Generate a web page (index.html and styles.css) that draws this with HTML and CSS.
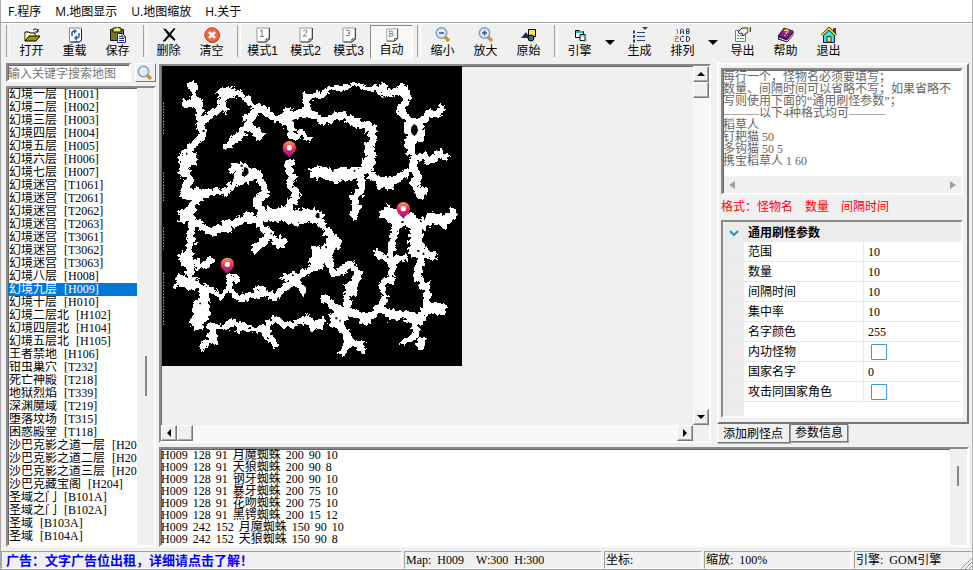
FILE: index.html
```html
<!DOCTYPE html>
<html lang="zh-CN">
<head>
<meta charset="utf-8">
<title>刷怪编辑器</title>
<link rel="stylesheet" href="styles.css">
</head>
<body>
<div class="app">
  <nav class="menu">
    <a href="#">F.程序</a><a href="#">M.地图显示</a><a href="#">U.地图缩放</a><a href="#">H.关于</a>
  </nav>

  <div class="toolbar">
    <i class="sep first"></i>
    <button class="tool"><svg viewBox="0 0 16 16"><path d="M1 14V5h4l1 1h5v3M9 3c2-2 4-1 5 1m0-2v3h-3" fill="none" stroke="#000"/><path d="M1.500 6h4l1 1h4v2H5l-3.500 4z" fill="#ff9"/><path d="M1 14l4-5h11l-4 5z" fill="#9a9a00" stroke="#000"/></svg>打开</button>
    <button class="tool"><svg viewBox="0 0 16 16"><path d="M2.500 1h12v12l-2 2h-10z" fill="#fff" stroke="#888"/><path d="M14.500 2v11l-2 2h-9" fill="none" stroke="#222"/><path d="M5 9V6q0-2 3-2M12 6v3q0 2-3 2" fill="none" stroke="#1d60b8" stroke-width="1.500"/><path d="M7 2l3 2-3 3zM10 8l-3 3 3 3z" fill="#1d60b8"/></svg>重载</button>
    <button class="tool"><svg viewBox="0 0 16 16"><path d="M.500 2.500h13v11H.500z" fill="#777720" stroke="#111"/><path d="M3 1h3V0h3v1h2v4H3z" fill="#ee6" stroke="#111"/><path d="M7.500 6.500h5l3 3v6h-8z" fill="#fff" stroke="#1a2b82"/><path d="M9 9.500h3m-3 2h5m-5 2h5M12 7v3h3" fill="none" stroke="#1a2b82"/></svg>保存</button>
    <i class="sep"></i>
    <button class="tool"><svg viewBox="0 0 16 16"><path d="M2 1.500l3 .5 3.500 4L13 1l1.500.5L10 7.500l4.500 5-1 1.500L8.500 9.500 4 14.500l-2.500 0L7 8z" fill="#000"/></svg>删除</button>
    <button class="tool"><svg viewBox="0 0 16 16"><circle cx="8.500" cy="8.500" r="7.500" fill="#777"/><circle cx="8" cy="8" r="7.200" fill="#f2683c" stroke="#c43d20"/><path d="M5 5l6 6m0-6l-6 6" stroke="#fff" stroke-width="2.500"/></svg>清空</button>
    <i class="sep"></i>
    <button class="tool"><svg viewBox="0 0 16 16"><path d="M2 1h12v11l-3 3H2z" fill="#fff" stroke="#999"/><path d="M14.500 1v11l-3 3H2.500M11 15v-3h3" fill="none" stroke="#444"/><path d="M5 4l2-1v6M5 9.500h4" fill="none" stroke="#777"/></svg>模式1</button>
    <button class="tool"><svg viewBox="0 0 16 16"><path d="M2 1h12v11l-3 3H2z" fill="#fff" stroke="#999"/><path d="M14.500 1v11l-3 3H2.500M11 15v-3h3" fill="none" stroke="#444"/><path d="M5 4q3-2 4 0 0 2-4 5h4" fill="none" stroke="#777"/></svg>模式2</button>
    <button class="tool"><svg viewBox="0 0 16 16"><path d="M2 1h12v11l-3 3H2z" fill="#fff" stroke="#999"/><path d="M14.500 1v11l-3 3H2.500M11 15v-3h3" fill="none" stroke="#444"/><path d="M5 3.500q4-1 4 1 0 1.500-2 1.500 2 0 2 1.500 0 2-4 1" fill="none" stroke="#777"/></svg>模式3</button>
    <button class="tool on"><svg viewBox="0 0 16 16"><path d="M2 1h12v11l-3 3H2z" fill="#fff" stroke="#999"/><path d="M14.500 1v11l-3 3H2.500M11 15v-3h3" fill="none" stroke="#444"/><path d="M4 3.500h3q2 0 2 1.500T7 6.500H6 7.500q2 0 2 1.500T7 9.500H4M5.500 3.500v6" fill="none" stroke="#777"/></svg>自动</button>
    <i class="sep"></i>
    <button class="tool"><svg viewBox="0 0 16 16"><path d="M10 10l4 4" stroke="#c89a35" stroke-width="3.500"/><circle cx="6.500" cy="6" r="5.200" fill="#dcecff" stroke="#8a9bb5" stroke-width="1.500"/><path d="M4 6h5" stroke="#345484" stroke-width="1.500"/></svg>缩小</button>
    <button class="tool"><svg viewBox="0 0 16 16"><path d="M10 10l4 4" stroke="#c89a35" stroke-width="3.500"/><circle cx="6.500" cy="6" r="5.200" fill="#dcecff" stroke="#8a9bb5" stroke-width="1.500"/><path d="M4 6h5M6.500 3.500v5" stroke="#345484" stroke-width="1.500"/></svg>放大</button>
    <button class="tool"><svg viewBox="0 0 16 16"><path d="M7.500 2.500h7v7h-7z" fill="#ffe34d" stroke="#000"/><path d="M0 11l5-6 4 6z" fill="#1d2c52"/><circle cx="10" cy="11" r="3" fill="#2f7476" stroke="#000"/></svg>原始</button>
    <i class="sep"></i>
    <button class="tool"><svg viewBox="0 0 16 16"><path d="M3.500 3.500h4l1 1h3v6h-8z" fill="#fff" stroke="#000"/><path d="M4 5h7" stroke="#2bb" stroke-width="2"/><path d="M8 7.500h5v6H8z" fill="#fff" stroke="#000"/><path d="M8 9h5" stroke="#2bb"/><path d="M14 12v2h-3" fill="none" stroke="#888"/></svg>引擎</button>
    <button class="drop" aria-label="引擎选项"></button>
    <button class="tool"><svg viewBox="0 0 16 16"><path d="M1 5h2m-2 4.500h2m-2 4.500h2" stroke="#24427c" stroke-width="3"/><path d="M5 5.500h8m-8 4h8m-8 4h8" stroke="#24427c"/><path d="M10 0h6l-3 3z" fill="#24427c"/></svg>生成</button>
    <button class="tool"><svg viewBox="0 0 16 16"><path d="M1 2.500h1.500V7M0 9.500h3v2H.500v3H4" fill="none" stroke="#e8672e"/><path d="M5.500 7V3l1-1h1l1 1v4M6 5h3M11.500 2v4.500H14V2h-2.500M11.500 4.500H14M9 9.500H6.500l-1 1v3l1 1H9M11.500 9.500H13l1.500 1v3l-1.500 1h-1.500z" fill="none" stroke="#22407a"/></svg>排列</button>
    <button class="drop" aria-label="排列选项"></button>
    <button class="tool"><svg viewBox="0 0 16 16"><path d="M.500 3.500h10v11H.500z" fill="#fff" stroke="#779"/><path d="M2 8.500h2m1 0h4m-7 3h2m1 0h4" stroke="#4a9f55"/><path d="M3 5l4-4h6v4l-5 4-1-3-2 1z" fill="#eee" stroke="#222"/><path d="M13 1h2v4h-2z" fill="#f3c71a"/><path d="M15.500 0v5" stroke="#24427c"/></svg>导出</button>
    <button class="tool"><svg viewBox="0 0 16 16"><path d="M0 9l6-8 9 3v4l-6 7-9-3z" fill="#4b0c55" stroke="#222"/><path d="M1 11l8 3 6-7" fill="none" stroke="#eee"/><path d="M1 8l5-7 9 3-6 7z" fill="#842294"/><path d="M6 4q3-2 4 0 0 1-2 2v1m-1 1v1" fill="none" stroke="#ffe52b" stroke-width="1.300"/></svg>帮助</button>
    <button class="tool"><svg viewBox="0 0 16 16"><path d="M12 1h3v6h-3z" fill="#b11"/><path d="M2.500 8v7.500h11V8L8 3z" fill="#1fe9ef" stroke="#115"/><path d="M6 15V9.500h4V15z" fill="#ffe833" stroke="#333"/><path d="M1 8.500l7-7 7 7" fill="none" stroke="#222" stroke-width="3"/><path d="M1 8.500l7-7 7 7" fill="none" stroke="#ffee20" stroke-width="1.500"/></svg>退出</button>
  </div>

  <main class="work">
    <aside class="side">
      <form class="search">
        <input type="text" class="sunk" placeholder="输入关键字搜索地图" aria-label="搜索地图">
        <button type="button" aria-label="搜索"><svg viewBox="0 0 16 16"><path d="M10 10l4 4" stroke="#c89a35" stroke-width="3.500"/><circle cx="6.500" cy="6.500" r="5.200" fill="#dcecff" stroke="#8a9bb5" stroke-width="1.500"/></svg></button>
      </form>
      <div class="maps sunk">
        <ul role="listbox" aria-label="地图列表">
          <li role="option">幻境一层<b>[H001]</b></li>
          <li role="option">幻境二层<b>[H002]</b></li>
          <li role="option">幻境三层<b>[H003]</b></li>
          <li role="option">幻境四层<b>[H004]</b></li>
          <li role="option">幻境五层<b>[H005]</b></li>
          <li role="option">幻境六层<b>[H006]</b></li>
          <li role="option">幻境七层<b>[H007]</b></li>
          <li role="option">幻境迷宫<b>[T1061]</b></li>
          <li role="option">幻境迷宫<b>[T2061]</b></li>
          <li role="option">幻境迷宫<b>[T2062]</b></li>
          <li role="option">幻境迷宫<b>[T2063]</b></li>
          <li role="option">幻境迷宫<b>[T3061]</b></li>
          <li role="option">幻境迷宫<b>[T3062]</b></li>
          <li role="option">幻境迷宫<b>[T3063]</b></li>
          <li role="option">幻境八层<b>[H008]</b></li>
          <li role="option" aria-selected="true">幻境九层<b>[H009]</b></li>
          <li role="option">幻境十层<b>[H010]</b></li>
          <li role="option">幻境二层北<b>[H102]</b></li>
          <li role="option">幻境四层北<b>[H104]</b></li>
          <li role="option">幻境五层北<b>[H105]</b></li>
          <li role="option">王者禁地<b>[H106]</b></li>
          <li role="option">钳虫巢穴<b>[T232]</b></li>
          <li role="option">死亡神殿<b>[T218]</b></li>
          <li role="option">地狱烈焰<b>[T339]</b></li>
          <li role="option">深渊魔域<b>[T219]</b></li>
          <li role="option">堕落坟场<b>[T315]</b></li>
          <li role="option">困惑殿堂<b>[T118]</b></li>
          <li role="option">沙巴克影之道一层<b>[H20</b></li>
          <li role="option">沙巴克影之道二层<b>[H20</b></li>
          <li role="option">沙巴克影之道三层<b>[H20</b></li>
          <li role="option">沙巴克藏宝阁<b>[H204]</b></li>
          <li role="option">圣域之门<b>[B101A]</b></li>
          <li role="option">圣域之门<b>[B102A]</b></li>
          <li role="option">圣域<b>[B103A]</b></li>
          <li role="option">圣域<b>[B104A]</b></li>
        </ul>
        <div class="track"><i class="thumb"></i></div>
      </div>
    </aside>

    <div class="content">
      <div class="upper">
        <section class="view sunk">
          <div class="canvas">
            <svg class="map" viewBox="0 0 900 900" role="img" aria-label="地图 H009">
              <defs>
                <filter id="rough" x="0" y="0" width="100%" height="100%">
                  <feTurbulence type="fractalNoise" baseFrequency="0.07" numOctaves="3" seed="4" result="n"/>
                  <feDisplacementMap in="SourceGraphic" in2="n" scale="24" xChannelSelector="R" yChannelSelector="G"/>
                  <feComponentTransfer><feFuncA type="discrete" tableValues="0 1"/></feComponentTransfer>
                </filter>
                <linearGradient id="pinfill" x1="0" y1="0" x2="0" y2="1"><stop offset="0" stop-color="#ff9650"/><stop offset=".45" stop-color="#f5245d"/><stop offset="1" stop-color="#6a1c9a"/></linearGradient>
                <g id="pin"><path d="M0 28C-4 17-20 14-20-3a20 20 0 0 1 40 0C20 14 4 17 0 28z" fill="url(#pinfill)"/><circle r="8" cy="-3" fill="#fff"/></g>
              </defs>
              <path fill="#000" d="M0 0h900v900H0z"/>
              <g filter="url(#rough)">
                <path fill="none" d="M0 0h900v900H0z"/>
                <g class="road" transform="translate(-6 -18)">
                  <path class="thin" d="M80 72L97 83 110 68M98 80L102 112M430 100L442 112 480 103M400 238L423 215 453 242M235 98L282 140M165 392L190 400M310 150L345 178"/>
                  <path d="M102 110L120 132 118 180 132 225 95 260 72 285 72 335 90 358 75 395 105 415 92 460 92 490M68 132H115M118 190L158 160 188 140 186 100 176 88M186 104L235 98M190 140L200 155M290 150L265 190 238 228 192 265M262 192L308 235M280 140L315 150 345 176 380 172 440 155 480 178M386 145V188L400 235M440 155V112M390 298L382 318 397 352 388 370 410 405 388 440 388 470M215 325L240 315 270 332 300 345M232 325L236 352 225 372 190 400M236 362L272 355 272 330M180 395L140 398 100 408 75 400M295 345L317 395 290 420 308 460M110 405L120 430M455 350L480 335"/>
                  <path class="wide" d="M105 120L118 138M108 188H128M75 275L85 300 110 298M65 325L80 345M62 395L85 400 130 405M60 465L90 462M188 98L220 98M250 180L275 178M365 172L388 178M425 155L450 155M225 325V340M385 310L392 322M308 465H350L385 450 400 470 480 470M255 475L275 468"/>
                </g>
                <g class="road" transform="translate(444 -18)">
                  <path class="thin" d="M0 105L30 110 60 85 100 85 140 72 175 90 210 82M320 372L330 345"/>
                  <path d="M0 160L40 185 95 165 150 195 185 200 190 240 170 270 190 295 165 340M150 350L155 390 130 420 140 450 130 475M210 82L225 100 250 98 275 85 295 110 270 150 296 180 290 210 310 232M295 180L330 188 360 160 380 165 400 140M330 185L335 230 310 235 300 265 315 295 310 320 260 360 210 365 180 345M315 295L340 290 360 305 385 280 415 295M310 320L322 345 310 375 345 408M340 490L365 465 400 482 435 450"/>
                  <path class="wide" d="M205 82L232 92M268 90L290 96M0 340L40 335 70 350 100 340 165 345M165 270L190 262M180 195V215M305 232L300 265M200 368H255M325 392L345 405M225 460L240 455 275 500M180 295L165 335"/>
                </g>
                <g class="road" transform="translate(-6 432)">
                  <path class="thin" d="M120 250L155 240 180 260 208 235 240 268 270 268M160 345L195 355 215 335 250 355 290 362 315 352 345 325 375 345 400 345 435 320"/>
                  <path d="M60 15L95 30 95 60 92 90 88 115 85 150 90 190 90 215 140 240 130 260M95 30L150 65 200 50 270 20 300 45 330 75 280 125M330 78L360 105 375 85M302 0L302 45M95 155L130 170 158 145M205 200L240 210M205 195L208 240M240 265L300 245 350 260 400 210 480 160M365 200L400 205 437 250M145 355L160 345 155 385 120 415M155 385L170 398M435 320L460 350 485 345M312 360L352 410"/>
                  <path class="wide" d="M60 15L95 20M82 88H105M60 150L90 140M68 158L100 162M48 212L85 218 110 225M135 255L130 280 105 295 140 298 120 325 98 345 125 340M185 48L215 50M255 25L280 22M315 5L345 22 370 5 405 30 430 12 485 22M315 70L335 80M350 100L370 95M290 245L315 245M385 205L410 205M455 120L480 130 460 165 490 160M235 348L250 358M428 325L440 330"/>
                </g>
                <g class="road" transform="translate(444 432)">
                  <path class="thin" d="M225 260L215 225 230 210 255 212M320 340V375L270 400M95 355L112 380M0 345L50 330"/>
                  <path d="M0 20L30 35 60 75 85 102 50 130 70 190 95 185 115 160 145 188 130 230 115 250 110 290M40 258L85 305M95 340L95 355 120 395 90 435M120 395L155 405M100 300L140 310 170 330 215 290 222 260M215 290L245 322 290 310 315 330 345 320M350 290V240L320 195 335 150M240 10L260 50 245 95 245 200M195 125L245 155 290 140M320 120L380 140M320 70L350 40 370 20 400 45 435 5M315 330V360M265 20L300 50"/>
                  <path class="wide" d="M0 5L30 30M60 80L80 100 40 125 40 150 10 150M105 238H140M75 300L110 310 65 330 100 345M145 405L165 410M150 325H180M235 315H255M310 325H340M345 290L405 300M345 285L360 310M340 235H360M315 195L335 200M245 95H258M240 160L260 162M300 130L330 110 340 150M215 0L250 25M320 60L315 105M265 30L300 25 325 60M322 395L345 402M285 318L320 325"/>
                </g>
              </g>
              <g class="specks"><path d="M236 296h6v6h-6zM251 160h4v6h-4zM72 260h4v6h-4zM122 192h6v6h-6zM384 130h5v5h-5zM520 545h5v7h-5zM490 540h5v7h-5zM474 535h5v7h-5zM510 312h5v5h-5zM575 312h5v5h-5zM664 90h5v5h-5zM90 628h6v6h-6zM100 640h5v5h-5zM112 710h5v5h-5zM390 625h5v5h-5zM520 754h6v6h-6zM532 761h4v6h-4zM766 552h6v6h-6zM782 560h5v7h-5zM718 466h7v5h-7zM800 755h5v6h-5zM675 570h4v6h-4zM325 500h5v5h-5z"/><path d="M756 174l9 6 3 14-6 13-9 1-6-10 1-14zM248 302l10 6 2 13-9 10-8-11zM460 450l5-10 7 2 1 13-8 2z"/></g>
              <path d="M4.500 110V205M4.500 320V410M4.500 485V550M4.500 620V780" class="edge"/>
              <use href="#pin" x="382" y="248"/><use href="#pin" x="724" y="431"/><use href="#pin" x="196" y="598"/>
            </svg>
          </div>
          <div class="bar vert"><button class="up" aria-label="向上"></button><i class="knob"></i><span></span><button class="down" aria-label="向下"></button></div>
          <div class="bar horz"><button class="left" aria-label="向左"></button><i class="knob"></i><span></span><button class="right" aria-label="向右"></button></div>
        </section>

        <aside class="panel">
          <div class="page">
            <div class="memo sunk">
              <textarea aria-label="刷怪点" spellcheck="false">每行一个，怪物名必须要填写；
数量、间隔时间可以省略不写；如果省略不写则使用下面的“通用刷怪参数”；
———以下4种格式均可———
稻草人
钉耙猫 50
多钩猫 50 5
携宝稻草人 1 60</textarea>
              <div class="flat"><i class="l"></i><i class="r"></i></div>
            </div>
            <p class="format"><span>格式：怪物名</span><span>数量</span><span>间隔时间</span></p>
            <div class="params sunk">
              <h2><svg viewBox="0 0 10 6"><path d="M1 1l4 4 4-4" fill="none" stroke="#1e8fd5" stroke-width="2"/></svg>通用刷怪参数</h2>
              <table>
                <tr><th><label for="p1">范围</label></th><td><input type="text" id="p1" value="10"></td></tr>
                <tr><th><label for="p2">数量</label></th><td><input type="text" id="p2" value="10"></td></tr>
                <tr><th><label for="p3">间隔时间</label></th><td><input type="text" id="p3" value="10"></td></tr>
                <tr><th><label for="p4">集中率</label></th><td><input type="text" id="p4" value="10"></td></tr>
                <tr><th><label for="p5">名字颜色</label></th><td><input type="text" id="p5" value="255"></td></tr>
                <tr><th><label for="p6">内功怪物</label></th><td><input type="checkbox" id="p6"></td></tr>
                <tr><th><label for="p7">国家名字</label></th><td><input type="text" id="p7" value="0"></td></tr>
                <tr><th><label for="p8">攻击同国家角色</label></th><td><input type="checkbox" id="p8"></td></tr>
              </table>
              <div class="rest"></div>
            </div>
          </div>
          <div class="tabs" role="tablist"><button role="tab" aria-selected="true">添加刷怪点</button><button role="tab">参数信息</button></div>
        </aside>
      </div>

      <section class="log sunk">
        <ol>
          <li><span>H009</span><span>128</span><span>91</span><span>月魔蜘蛛</span><span>200</span><span>90</span><span>10</span></li>
          <li><span>H009</span><span>128</span><span>91</span><span>天狼蜘蛛</span><span>200</span><span>90</span><span>8</span></li>
          <li><span>H009</span><span>128</span><span>91</span><span>钢牙蜘蛛</span><span>200</span><span>90</span><span>10</span></li>
          <li><span>H009</span><span>128</span><span>91</span><span>暴牙蜘蛛</span><span>200</span><span>75</span><span>10</span></li>
          <li><span>H009</span><span>128</span><span>91</span><span>花吻蜘蛛</span><span>200</span><span>75</span><span>10</span></li>
          <li><span>H009</span><span>128</span><span>91</span><span>黑锷蜘蛛</span><span>200</span><span>15</span><span>12</span></li>
          <li><span>H009</span><span>242</span><span>152</span><span>月魔蜘蛛</span><span>150</span><span>90</span><span>10</span></li>
          <li><span>H009</span><span>242</span><span>152</span><span>天狼蜘蛛</span><span>150</span><span>90</span><span>8</span></li>
        </ol>
        <div class="track"><i class="thumb"></i></div>
      </section>
    </div>
  </main>

  <footer class="status">
    <a href="#">广告：文字广告位出租，详细请点击了解！</a>
    <div><span>Map:</span><span>H009</span><span class="size">W:300</span><span>H:300</span></div>
    <div>坐标:</div>
    <div><span>缩放:</span><span>100%</span></div>
    <div><span>引擎:</span><span>GOM引擎</span></div>
    <svg class="grip" viewBox="0 0 12 12"><path d="M1 12L12 1M5 12l7-7M9 12l3-3" stroke="#999"/></svg>
  </footer>
</div>
</body>
</html>
```

FILE: styles.css
```css
* { box-sizing: border-box; }

body {
  margin: 0;
  font: 12px/12px "Liberation Serif", "Noto Sans CJK SC", serif;
  color: #000;
  background: #f0f0f0;
}

button, input, textarea { font: inherit; color: inherit; margin: 0; padding: 0; border: 0; border-radius: 0; }
button { background: #f0f0f0; }
ul, ol { margin: 0; padding: 0; list-style: none; }
a { color: inherit; text-decoration: none; }

.app {
  display: flex;
  flex-direction: column;
  height: 100vh;
  border-left: 1px solid #a8a8a8;
  border-right: 1px solid #b0b0b0;
  border-bottom: 1px solid #a0a0a0;
}

.sunk {
  border: 2px solid;
  border-color: #8a8a8a #fff #fff #8a8a8a;
  box-shadow: inset 1px 1px #666;
}

/* Menu and toolbar */
.menu {
  display: flex;
  gap: 14px;
  height: 23px;
  padding: 0 7px;
  background: #fff;
  border-bottom: 1px solid #a0a0a0;
  font: 12px/24px "Open Sans", "Noto Sans CJK SC", sans-serif;
}

.toolbar {
  display: flex;
  height: 40px;
  padding: 1px 5px 4px;
  border-top: 1px solid #fff;
}

.tool {
  display: flex;
  flex-direction: column;
  align-items: center;
  gap: 1px;
  width: 43px;
  padding-top: 2px;
  font: 12px/15px "Liberation Sans", "Noto Sans CJK SC", sans-serif;
  white-space: nowrap;
}
.tool svg { width: 16px; height: 16px; }
.tool.on {
  border: 1px solid;
  border-color: #8a8a8a #fff #fff #8a8a8a;
  background: #f8f8f8;
}

.sep { width: 8px; padding-left: 4px; }
.sep::before { content: ""; display: block; width: 2px; height: 32px; border-left: 1px solid #a0a0a0; border-right: 1px solid #fff; }
.sep.first { width: 4px; padding-left: 0; }

.drop { width: 17px; }
.drop::before { content: ""; display: block; margin: 0 auto; width: 0; border: 5px solid transparent; border-top-color: #000; border-bottom: 0; }

/* Work area */
.work {
  flex: 1;
  display: flex;
  gap: 3px;
  min-height: 0;
  padding: 0 3px 4px 5px;
}

.side { display: flex; flex-direction: column; gap: 4px; width: 150px; }
.search { display: flex; gap: 4px; height: 19px; }
.search input { flex: 1; min-width: 0; padding-top: 3px; background: #fff; }
.search input::placeholder { color: #777; opacity: 1; }
.search button { width: 21px; padding: 1px; border: 1px solid; border-color: #fff #777 #777 #fff; }
.search svg { display: block; width: 16px; height: 16px; }

.maps { flex: 1; display: flex; min-height: 0; background: #fff; }
.maps ul { flex: 1; min-width: 0; overflow: hidden; line-height: 13px; }
.maps li { display: flex; gap: 7px; height: 13px; padding-left: 1px; white-space: nowrap; overflow: hidden; }
.maps b { font-weight: normal; }
.maps li[aria-selected] { background: #0078d7; color: #fff; }
.track { width: 17px; background: #f0f0f0; }
.thumb { display: block; width: 2px; margin: 268px 0 0 8px; height: 40px; background: #868686; }

.content { flex: 1; display: flex; flex-direction: column; gap: 4px; min-width: 0; }
.upper { flex: 1; display: flex; gap: 6px; min-height: 0; }

.view {
  flex: 1;
  display: grid;
  grid-template-columns: 1fr 16px;
  grid-template-rows: 1fr 16px;
  min-width: 0;
  margin-top: 1px;
}
.canvas { overflow: hidden; padding: 0 0 0 1px; }
.map { display: block; width: 300px; height: 300px; }
.road path { fill: none; stroke: #fff; stroke-width: 22; stroke-linejoin: bevel; }
.road .thin { stroke-width: 16; }
.road .wide { stroke-width: 36; }
.specks { fill: #000; }
.edge { stroke: #fff; stroke-width: 3; stroke-dasharray: 3 6; }

.bar {
  display: flex;
  background: repeating-conic-gradient(#fff 0 25%, #f0f0f0 0 50%) 0 0 / 2px 2px;
}
.bar.vert { flex-direction: column; }
.bar span { flex: 1; }
.bar button, .knob {
  display: flex;
  align-items: center;
  justify-content: center;
  width: 16px;
  height: 16px;
  background: #f0f0f0;
  border: 1px solid;
  border-color: #fff #777 #777 #fff;
  box-shadow: inset -1px -1px #a8a8a8;
}
.bar button::before { content: ""; border: 4px solid transparent; }
.bar .up::before { border-bottom-color: #000; border-top: 0; }
.bar .down::before { border-top-color: #000; border-bottom: 0; }
.bar .left::before { border-right-color: #000; border-left: 0; }
.bar .right::before { border-left-color: #000; border-right: 0; }

/* Right panel */
.panel { display: flex; flex-direction: column; width: 252px; }
.page {
  flex: 1;
  display: flex;
  flex-direction: column;
  min-height: 0;
  padding: 3px 4px 4px 2px;
  border: 2px solid;
  border-color: #fff #777 #777 #fff;
}
.memo { display: flex; flex-direction: column; height: 127px; background: #fff; }
.memo textarea { flex: 1; width: 100%; padding: 1px 0 0 0; resize: none; overflow: hidden; outline: 0; background: transparent; color: #666; }
.flat { display: flex; justify-content: space-between; align-items: center; height: 17px; margin-left: 1px; padding: 0 5px; background: #f0f0f0; }
.flat i { border: 4px solid transparent; }
.flat .l { border-right: 6px solid #a0a0a0; border-left: 0; }
.flat .r { border-left: 6px solid #a0a0a0; border-right: 0; }
.format { display: flex; gap: 12px; margin: 0; line-height: 25px; color: #f00; }

.params { flex: 1; display: flex; flex-direction: column; min-height: 0; background: #fff; }
.params h2 { display: flex; align-items: center; gap: 9px; height: 20px; margin: 0; padding: 1px 0 0 6px; font-size: 12px; font-weight: bold; background: #ececec; }
.params h2 svg { width: 10px; height: 6px; }
.params table { width: 100%; border-spacing: 0; table-layout: fixed; }
.params th, .params td { height: 20px; padding: 1px 0 0 4px; border-bottom: 1px solid #e8e8e8; font-weight: normal; text-align: left; vertical-align: middle; }
.params th { width: 141px; border-left: 21px solid #ececec; border-right: 1px solid #e8e8e8; }
.params td input { display: block; width: 100%; height: 16px; background: transparent; }
.params td input[type=checkbox] { appearance: none; width: 16px; margin-left: 3px; border: 1px solid #3994ee; border-radius: 1px; }
.rest { flex: 1; border-left: 21px solid #ececec; }

.tabs { display: flex; align-items: flex-start; height: 19px; }
.tabs button { height: 18px; padding: 0 4px; border: 1px solid; border-color: #777 #777 #777 #999; box-shadow: 1px 1px #aaa; }
.tabs [aria-selected] { height: 19px; padding: 2px 6px 0 5px; border-top: 0; border-left-color: #fff; }

/* Spawn list */
.log { display: flex; height: 100px; background: #fff; }
.log ol { flex: 1; overflow: hidden; }
.log li { display: flex; gap: 5px; height: 12px; }
.log .thumb { margin: 17px 0 0 7px; height: 20px; }

/* Status bar */
.status { position: relative; display: grid; grid-template-columns: 401px 198px 98px 148px 1fr; gap: 2px; height: 18px; line-height: 17px; }
.status > a, .status > div { display: flex; gap: 6px; padding-left: 1px; border: 1px solid; border-color: #a0a0a0 #fff #fff #a0a0a0; white-space: nowrap; overflow: hidden; }
.status > a { padding-left: 4px; color: #00f; font-size: 13px; font-weight: bold; }
.status .size { padding-left: 6px; }
.grip { position: absolute; right: 0; bottom: 0; width: 12px; height: 12px; }
```
